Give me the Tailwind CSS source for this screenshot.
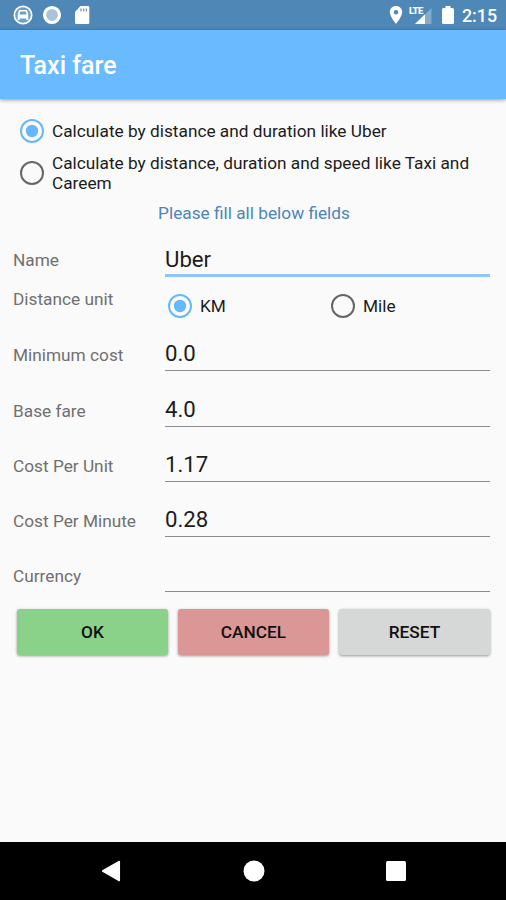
<!DOCTYPE html>
<html lang="en">
<head>
<meta charset="utf-8">
<title>Taxi fare</title>
<script src="https://cdn.jsdelivr.net/npm/@tailwindcss/browser@4"></script>
</head>
<body class="bg-[#fafafa]">
<div class="flex h-[900px] w-[506px] flex-col overflow-hidden bg-[#fafafa] font-[Roboto,sans-serif] text-[17.25px] leading-5 text-[#1c1c1c]">
  <header class="shrink-0">
    <div class="flex h-[30px] items-center justify-between bg-[#4f88b7] pr-[9px] pl-[13px] text-white">
      <div class="flex items-center">
        <svg class="h-5 w-5" viewBox="0 0 20 20"><circle cx="10" cy="10" r="8.700" fill="#6f9fc6" stroke="white" stroke-width="1.700"/><path fill-rule="evenodd" d="M6 5h8l1.300 4.500v5.500h-2v-1.500H6.700V15h-2V9.500zM7.200 6.500L6.500 9.500h7L12.800 6.500z" fill="white"/></svg>
        <svg class="ml-[9px] h-5 w-5" viewBox="0 0 20 20"><circle cx="10" cy="10" r="7.500" fill="#a9c3da" stroke="white" stroke-width="3.200"/></svg>
        <svg class="ml-3 h-5 w-4" viewBox="0 0 16 20"><path d="M6.500 1H14q1.300 0 1.300 1.300v15.400Q15.300 19 14 19H2.300Q1 19 1 17.700V7z" fill="white"/><path d="M7 3.500v3M9.700 3.500v3M12.400 3.500v3" stroke="#6e9cc2" stroke-width="1.300"/></svg>
      </div>
      <div class="flex items-center">
        <svg class="h-5 w-[14px]" viewBox="0 0 14 20"><path fill-rule="evenodd" d="M7 1C3.500 1 .8 3.700.8 7.100.8 11.700 7 19 7 19s6.200-7.300 6.200-11.900C13.200 3.700 10.500 1 7 1zm0 4a2.200 2.200 0 1 1 0 4.400A2.200 2.200 0 0 1 7 5z" fill="white"/></svg>
        <div class="relative ml-[6px] h-5 w-6">
          <svg class="h-5 w-6" viewBox="0 0 24 20"><path d="M6 19L22.500 3v16z" fill="white" opacity=".3"/><path d="M6 19L16 9.300V19z" fill="white"/></svg>
          <span class="absolute top-[1px] left-0 text-[9.5px] leading-[9px] font-black tracking-[-0.6px]">LTE</span>
        </div>
        <svg class="ml-2 h-5 w-[14px]" viewBox="0 0 14 20"><path d="M4.500 1h5v2h2q1.500 0 1.500 1.500v13q0 1.500-1.500 1.500h-9Q1 19 1 17.500v-13Q1 3 2.500 3h2z" fill="white"/></svg>
        <span class="ml-[7px] pt-[2px] text-[17.8px] leading-5 font-medium">2:15</span>
      </div>
    </div>
    <div class="flex h-[69px] items-center bg-[#6abaff] pt-[2px] pl-5 shadow-[0_1px_4px_rgba(0,0,0,0.4)]">
      <h1 class="text-[25px] leading-7 font-medium text-white">Taxi fare</h1>
    </div>
  </header>

  <main class="flex-1">
    <div class="flex h-[53px] items-end pb-[9px] pl-5">
      <svg class="h-6 w-6 shrink-0" viewBox="0 0 24 24"><circle cx="12" cy="12" r="11" fill="none" stroke="#67b7fb" stroke-width="2"/><circle cx="12" cy="12" r="6.200" fill="#67b7fb"/></svg>
      <span class="ml-2 pb-[2px]">Calculate by distance and duration like Uber</span>
    </div>
    <div class="flex h-[42px] items-center pr-5 pl-5">
      <svg class="h-6 w-6 shrink-0" viewBox="0 0 24 24"><circle cx="12" cy="12" r="11" fill="none" stroke="#666" stroke-width="2"/></svg>
      <span class="ml-2 pb-[1px]">Calculate by distance, duration and speed like Taxi and Careem</span>
    </div>
    <p class="mt-[9px] pl-[2px] text-center text-[#4c86b9]">Please fill all below fields</p>

    <div class="flex h-[54px] items-end pr-4 pl-[13px] text-[#707070]">
      <span class="w-[152px] pb-[7px]">Name</span>
      <span class="flex-1 border-b-[3px] border-[#8fc7fa] pb-[2px] text-[22.2px] leading-[26px] text-[#1c1c1c]">Uber</span>
    </div>
    <div class="flex h-[39px] pl-[13px]">
      <span class="w-[155px] pt-3 text-[#707070]">Distance unit</span>
      <div class="flex h-6 w-[163px] items-center self-end translate-y-[2px]">
        <svg class="h-6 w-6" viewBox="0 0 24 24"><circle cx="12" cy="12" r="11" fill="none" stroke="#67b7fb" stroke-width="2"/><circle cx="12" cy="12" r="6.200" fill="#67b7fb"/></svg>
        <span class="ml-2">KM</span>
      </div>
      <div class="flex h-6 items-center self-end translate-y-[2px]">
        <svg class="h-6 w-6" viewBox="0 0 24 24"><circle cx="12" cy="12" r="11" fill="none" stroke="#666" stroke-width="2"/></svg>
        <span class="ml-2">Mile</span>
      </div>
    </div>
    <div class="grid auto-rows-[55.3px] pr-4 pl-[13px] text-[#707070]">
      <div class="flex items-end"><span class="w-[152px] pb-[6px]">Minimum cost</span><span class="flex-1 border-b border-[#8c8c8c] pb-1 text-[22.2px] leading-[26px] text-[#1c1c1c]">0.0</span></div>
      <div class="flex items-end"><span class="w-[152px] pb-[6px]">Base fare</span><span class="flex-1 border-b border-[#8c8c8c] pb-1 text-[22.2px] leading-[26px] text-[#1c1c1c]">4.0</span></div>
      <div class="flex items-end"><span class="w-[152px] pb-[6px]">Cost Per Unit</span><span class="flex-1 border-b border-[#8c8c8c] pb-1 text-[22.2px] leading-[26px] text-[#1c1c1c]">1.17</span></div>
      <div class="flex items-end"><span class="w-[152px] pb-[6px]">Cost Per Minute</span><span class="flex-1 border-b border-[#8c8c8c] pb-1 text-[22.2px] leading-[26px] text-[#1c1c1c]">0.28</span></div>
      <div class="flex items-end"><span class="w-[152px] pb-[6px]">Currency</span><span class="h-[31px] flex-1 border-b border-[#8c8c8c]"></span></div>
    </div>
    <div class="mt-[17px] grid grid-cols-3 gap-[10px] pr-4 pl-[17px] font-medium text-[#111]">
      <button class="h-[46px] rounded-[3px] bg-[#8ad18a] shadow-[0_1px_3px_rgba(0,0,0,0.4)]">OK</button>
      <button class="h-[46px] rounded-[3px] bg-[#db9696] shadow-[0_1px_3px_rgba(0,0,0,0.4)]">CANCEL</button>
      <button class="h-[46px] rounded-[3px] bg-[#d6d7d7] shadow-[0_1px_3px_rgba(0,0,0,0.4)]">RESET</button>
    </div>
  </main>

  <nav class="flex h-[58px] shrink-0 items-center justify-between bg-black pr-[100px] pl-[101px]">
    <svg class="h-[22px] w-5" viewBox="0 0 20 22"><path d="M18.300 1.500v19L1.700 11z" fill="white" stroke="white" stroke-width="1.500" stroke-linejoin="round"/></svg>
    <svg class="h-[22px] w-[22px]" viewBox="0 0 22 22"><circle cx="11" cy="11" r="10.500" fill="white"/></svg>
    <svg class="h-5 w-5" viewBox="0 0 20 20"><rect width="20" height="20" rx="1.500" fill="white"/></svg>
  </nav>
</div>
</body>
</html>
